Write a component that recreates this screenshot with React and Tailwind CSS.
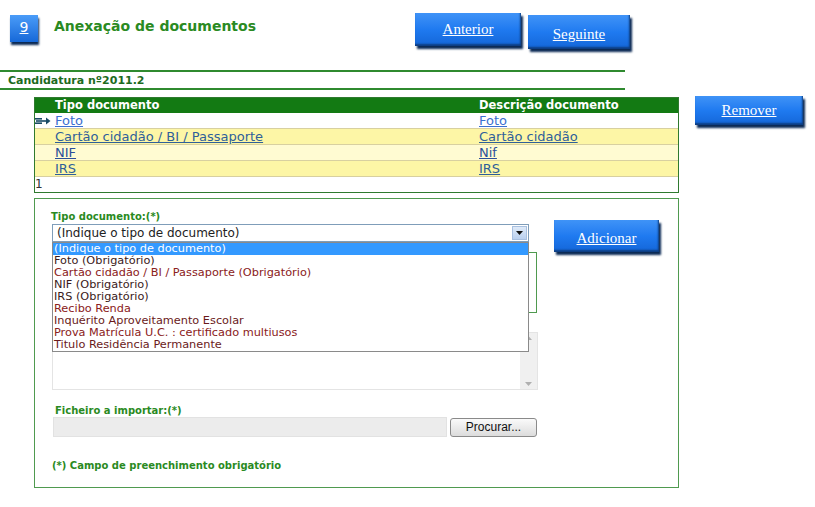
import React from "react";

const btn =
  "flex items-start justify-center text-white underline bg-gradient-to-b from-[#3f93f7] via-[#1f7af0] to-[#1466d8] shadow-[2px_3px_2px_#0b2a55,inset_-1px_-2px_2px_#0d3d80] [font-family:'Liberation_Serif',serif] text-[15px]";

function RowIcon() {
  return (
    <svg width="16" height="8" viewBox="0 0 16 8">
      <rect x="0" y="1" width="7" height="1.6" fill="#1a4b66" />
      <rect x="1" y="3.2" width="7" height="1.6" fill="#1a4b66" />
      <rect x="0" y="5.4" width="7" height="1.6" fill="#1a4b66" />
      <rect x="8" y="3.2" width="5" height="1.6" fill="#1a4b66" />
      <path d="M11 0.5 L15.5 4 L11 7.5 Z" fill="#1a4b66" />
    </svg>
  );
}

const rows = [
  { t: "Foto", d: "Foto", bg: "bg-white", link: "text-[#3a6fd0]", icon: true },
  { t: "Cartão cidadão / BI / Passaporte", d: "Cartão cidadão", bg: "bg-[#fdf6a6]", link: "text-[#2f5f9a]" },
  { t: "NIF", d: "Nif", bg: "bg-[#fffbd2]", link: "text-[#2c4f9a]" },
  { t: "IRS", d: "IRS", bg: "bg-[#fdf6a6]", link: "text-[#2f5f9a]" },
];

const options = [
  { t: "(Indique o tipo de documento)", sel: true },
  { t: "Foto (Obrigatório)", c: "text-[#3a1a1a]" },
  { t: "Cartão cidadão / BI / Passaporte (Obrigatório)", c: "text-[#8a2020]" },
  { t: "NIF (Obrigatório)", c: "text-[#3a1a1a]" },
  { t: "IRS (Obrigatório)", c: "text-[#3a1a1a]" },
  { t: "Recibo Renda", c: "text-[#8a2020]" },
  { t: "Inquérito Aproveitamento Escolar", c: "text-[#6a1a1a]" },
  { t: "Prova Matrícula U.C. : certificado multiusos", c: "text-[#8a2020]" },
  { t: "Titulo Residência Permanente", c: "text-[#6a1a1a]" },
];

export default function App() {
  return (
    <div className="w-[815px] h-[507px] bg-white overflow-hidden [font-family:'DejaVu_Sans',Verdana,sans-serif]">
      {/* Header */}
      <div className="flex h-[70px]">
        <div className="ml-[10px] mt-[15px] w-[28px] h-[27px] flex justify-center pt-[2px] text-white underline text-[14px] bg-gradient-to-b from-[#4a9cf8] to-[#1568d8] shadow-[1px_3px_2px_#0b2a55]">
          9
        </div>
        <div className="ml-[16px] mt-[16px] w-[361px] text-[14px] font-bold text-[#2a8a22]">
          Anexação de documentos
        </div>
        <div className={`${btn} mt-[13px] w-[106px] h-[33px] pt-[5px]`}>Anterior</div>
        <div className={`${btn} ml-[7px] mt-[15px] w-[102px] h-[34px] pt-[8px]`}>Seguinte</div>
      </div>

      {/* Candidatura bar */}
      <div className="w-[625px] border-t-2 border-b-2 border-[#2f8a2f] h-[20px] pl-[8px] pt-[2px] text-[11px] leading-[14px] font-bold text-[#1d6b1d]">
        Candidatura nº2011.2
      </div>

      {/* Table + Remover */}
      <div className="flex mt-[7px]">
        <div className="ml-[34px] w-[645px] border border-[#2f7a2f] text-[11.5px]">
          <div className="flex h-[15px] bg-[#137a13] text-white font-bold leading-[15px]">
            <div className="w-[20px]" />
            <div className="w-[424px]">Tipo documento</div>
            <div className="flex-1">Descrição documento</div>
          </div>
          {rows.map((r, i) => (
            <div key={i} className={`flex h-[16px] leading-[15px] text-[13px] border-b border-[#d8d0a0] ${r.bg}`}>
              <div className="w-[20px] flex items-center justify-start">{r.icon && <RowIcon />}</div>
              <div className={`w-[424px] underline ${r.link}`}>{r.t}</div>
              <div className={`flex-1 underline ${r.link}`}>{r.d}</div>
            </div>
          ))}
          <div className="h-[15px] leading-[15px] text-[12px] text-[#333] bg-white">1</div>
        </div>
        <div className={`${btn} ml-[16px] -mt-[1px] w-[108px] h-[29px] pt-[3px]`}>Remover</div>
      </div>

      {/* Form box */}
      <div className="ml-[34px] mt-[5px] w-[645px] h-[290px] border border-[#4f9a4f] flex">
        <div className="ml-[16px] w-[488px] flex flex-col">
          <div className="mt-[10px] text-[10px] font-bold text-[#2a8a22] h-[15px]">Tipo documento:(*)</div>
          <div className="relative ml-[1px]">
            <div className="w-[477px] h-[18px] border border-[#7f9db9] bg-white flex items-center text-[12px] text-[#222] pl-[4px]">
              <span className="flex-1">(Indique o tipo de documento)</span>
              <div className="w-[15px] h-[14px] mr-[1px] bg-gradient-to-b from-[#dfeaf8] to-[#b9d0ef] border border-[#a8c0e0] flex items-center justify-center">
                <svg width="7" height="4" viewBox="0 0 7 4"><path d="M0 0 L7 0 L3.5 4 Z" fill="#111" /></svg>
              </div>
            </div>
            {/* dropdown list overlay */}
            <div className="absolute left-0 top-[18px] w-[477px] h-[110px] border border-[#8a8a8a] bg-white z-10 text-[11.3px] leading-[12px]">
              {options.map((o, i) => (
                <div key={i} className={`pl-[1px] h-[12px] ${o.sel ? "bg-[#3399ff] text-white" : o.c}`}>{o.t}</div>
              ))}
            </div>
          </div>
          {/* hidden input behind dropdown */}
          <div className="ml-[1px] mt-[10px] w-[485px] h-[61px] border border-[#4f9a4f] bg-white" />
          {/* textarea */}
          <div className="ml-[1px] mt-[19px] w-[486px] h-[58px] border border-[#e4e4e4] flex justify-end">
            <div className="w-[17px] h-full bg-[#f0f0f0] flex flex-col justify-between items-center py-[3px]">
              <svg width="7" height="4" viewBox="0 0 7 4"><path d="M0 4 L7 4 L3.5 0 Z" fill="#b0b0b0" /></svg>
              <svg width="7" height="4" viewBox="0 0 7 4"><path d="M0 0 L7 0 L3.5 4 Z" fill="#b0b0b0" /></svg>
            </div>
          </div>
          <div className="mt-[13px] ml-[4px] text-[10px] font-bold text-[#2a8a22] h-[14px]">Ficheiro a importar:(*)</div>
          <div className="flex items-center">
            <div className="ml-[2px] w-[394px] h-[20px] bg-[#ececec] border border-[#e2e2e2]" />
            <div className="ml-[3px] w-[87px] h-[19px] rounded-[3px] border border-[#8a8a8a] bg-gradient-to-b from-[#fafafa] to-[#dcdcdc] flex items-center justify-center [font-family:'Liberation_Sans',Arial,sans-serif] text-[12px] text-[#111]">
              Procurar...
            </div>
          </div>
          <div className="mt-[21px] ml-[1px] text-[10px] font-bold text-[#2a8a22]">(*) Campo de preenchimento obrigatório</div>
        </div>
        <div className={`${btn} ml-[15px] mt-[21px] w-[105px] h-[32px] pt-[7px]`}>Adicionar</div>
      </div>
    </div>
  );
}
